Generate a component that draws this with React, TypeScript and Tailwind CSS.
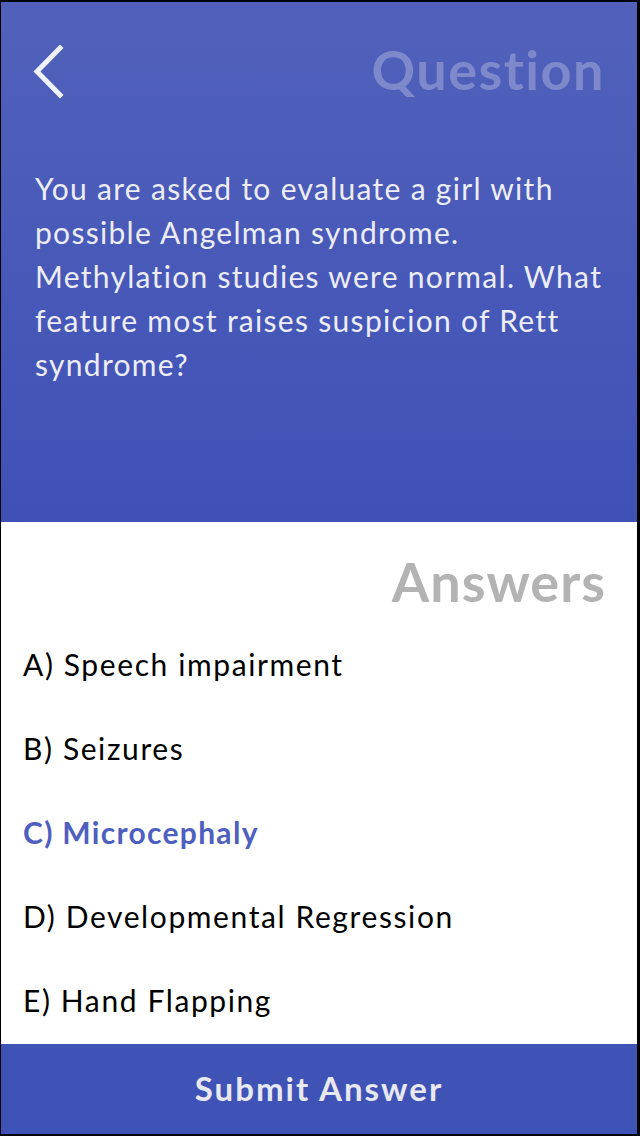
const answers = [
  { label: "A) Speech impairment", selected: false },
  { label: "B) Seizures", selected: false },
  { label: "C) Microcephaly", selected: true },
  { label: "D) Developmental Regression", selected: false },
  { label: "E) Hand Flapping", selected: false },
]

function BackChevron() {
  return (
    <svg width="34" height="56" viewBox="0 0 34 56" className="-ml-[3px] mt-[8px]">
      <polyline
        points="28,3 5,26.5 28,50"
        fill="none"
        stroke="#eef4ff"
        strokeWidth="5"
        strokeLinecap="square"
        strokeLinejoin="miter"
      />
    </svg>
  )
}

export default function App() {
  return (
    <div
      className="w-[640px] h-[1136px] bg-black pt-[2px] pl-[1px] pr-[3px] pb-[2px]"
      style={{ fontFamily: "Lato, 'Open Sans', sans-serif" }}
    >
      <div className="flex flex-col h-full">
        {/* Question header */}
        <div className="h-[520px] bg-gradient-to-b from-[#5161bb] to-[#3f51b5] pl-[34px] pr-[32px]">
          <div className="flex items-center justify-between h-[142px] pb-[8px]">
            <BackChevron />
            <h1 className="text-[54px] font-bold text-[#7e89cc] tracking-[1.5px]">Question</h1>
          </div>
          <p className="mt-[22px] text-[30px] leading-[44px] text-[#ecedf6] font-normal tracking-[1.3px]">
            You are asked to evaluate a girl with possible Angelman syndrome. Methylation studies were normal. What
            feature most raises suspicion of Rett syndrome?
          </p>
        </div>

        {/* Answers */}
        <div className="flex-1 bg-white px-[22px]">
          <h2 className="text-right text-[54px] font-bold text-[#b3b3b3] pt-[28px] pb-[8px] pr-[9px] leading-[64px] tracking-[1px]">
            Answers
          </h2>
          <ul className="flex flex-col">
            {answers.map((a) => (
              <li
                key={a.label}
                className={
                  a.selected
                    ? "h-[84px] flex items-center text-[30px] font-bold text-[#4f5fbf] tracking-[1.3px]"
                    : "h-[84px] flex items-center text-[30px] text-black tracking-[1.6px]"
                }
              >
                {a.label}
              </li>
            ))}
          </ul>
        </div>

        {/* Submit */}
        <button className="h-[90px] bg-[#3f52b5] text-[#e8e8f0] text-[33px] font-bold tracking-[2px] flex items-center justify-center">
          Submit Answer
        </button>
      </div>
    </div>
  )
}
